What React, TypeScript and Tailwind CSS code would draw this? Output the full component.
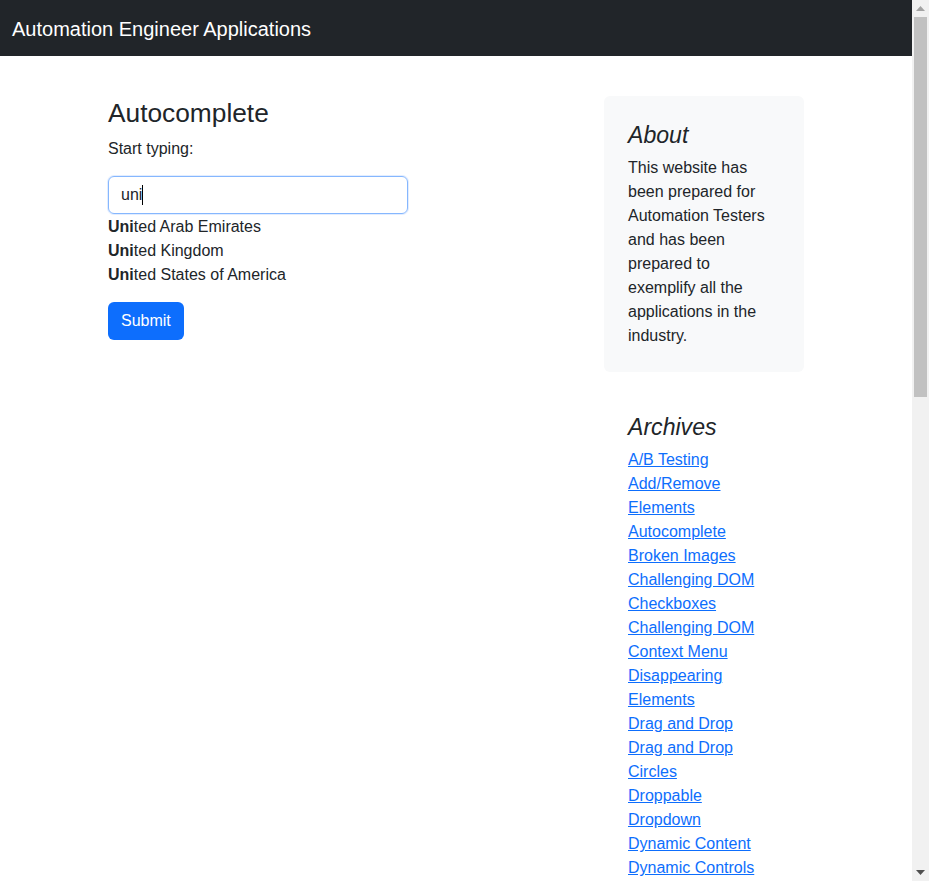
const countries = ['United Arab Emirates', 'United Kingdom', 'United States of America']

// each entry is one rendered line; wrapped items are split to keep the same breaks
const archives = [
  ['A/B Testing'],
  ['Add/Remove', 'Elements'],
  ['Autocomplete'],
  ['Broken Images'],
  ['Challenging DOM'],
  ['Checkboxes'],
  ['Challenging DOM'],
  ['Context Menu'],
  ['Disappearing', 'Elements'],
  ['Drag and Drop'],
  ['Drag and Drop', 'Circles'],
  ['Droppable'],
  ['Dropdown'],
  ['Dynamic Content'],
  ['Dynamic Controls'],
]

const aboutLines = [
  'This website has',
  'been prepared for',
  'Automation Testers',
  'and has been',
  'prepared to',
  'exemplify all the',
  'applications in the',
  'industry.',
]

function Scrollbar() {
  return (
    <div className="w-[17px] h-full bg-[#f1f1f1] flex flex-col items-center shrink-0">
      <div className="h-[17px] w-full flex items-center justify-center">
        <svg width="9" height="5" viewBox="0 0 9 5">
          <path d="M0 5 L4.5 0 L9 5 Z" fill="#a3a3a3" />
        </svg>
      </div>
      <div className="w-[13px] h-[380px] bg-[#c1c1c1]" />
      <div className="flex-1" />
      <div className="h-[17px] w-full flex items-center justify-center">
        <svg width="9" height="5" viewBox="0 0 9 5">
          <path d="M0 0 L9 0 L4.5 5 Z" fill="#505050" />
        </svg>
      </div>
    </div>
  )
}

export default function App() {
  return (
    <div
      className="h-[881px] w-[929px] flex overflow-hidden bg-white text-[#212529] text-base leading-6"
      style={{ fontFamily: '"Liberation Sans", Arial, sans-serif' }}
    >
      <div className="w-[912px] h-full overflow-hidden">
        {/* Navbar */}
        <nav className="h-14 bg-[#212529] flex items-center px-3 pt-[2px]">
          <span className="text-white text-xl">Automation Engineer Applications</span>
        </nav>

        <div className="w-[720px] mx-auto pt-10 flex justify-between">
          {/* Main column */}
          <div className="pl-3 w-[480px]">
            <h3 className="text-[26.3px] leading-[35.5px] font-medium mb-1">Autocomplete</h3>
            <p className="mb-4 pt-px leading-[23px]">Start typing:</p>
            <div className="w-[300px] h-[38px] rounded-md border border-[#86b7fe] shadow-[0_0_0_1px_rgba(13,110,253,0.12)] flex items-center px-3">
              <span className="text-[#212529]">uni</span>
              <span className="w-px h-[20px] bg-black" />
            </div>
            <div className="flex flex-col pt-px">
              {countries.map((c) => (
                <div key={c} className="leading-[24px]">
                  <strong className="font-bold">Uni</strong>
                  {c.slice(3)}
                </div>
              ))}
            </div>
            <button className="mt-[15px] h-[38px] px-[13px] rounded-md bg-[#0d6efd] text-white">Submit</button>
          </div>

          {/* Sidebar */}
          <div className="pr-3 w-[212px]">
            <div className="p-6 mb-4 bg-[#f8f9fa] rounded-md">
              <h4 className="text-[23.1px] leading-[31.7px] font-medium italic mb-1">About</h4>
              <p className="text-[#212529]">
                {aboutLines.map((l) => (
                  <span key={l} className="block whitespace-nowrap">
                    {l}
                  </span>
                ))}
              </p>
            </div>
            <div className="px-6 pt-6">
              <h4 className="text-[23.1px] leading-[31.7px] font-medium italic mb-[5px]">Archives</h4>
              <ol className="flex flex-col">
                {archives.map((lines, i) => (
                  <li key={i}>
                    <a href="#" className="text-[#0d6efd] underline whitespace-nowrap">
                      {lines.map((l, j) => (
                        <span key={j}>
                          {j > 0 && <br />}
                          {l}
                        </span>
                      ))}
                    </a>
                  </li>
                ))}
              </ol>
            </div>
          </div>
        </div>
      </div>
      <Scrollbar />
    </div>
  )
}
